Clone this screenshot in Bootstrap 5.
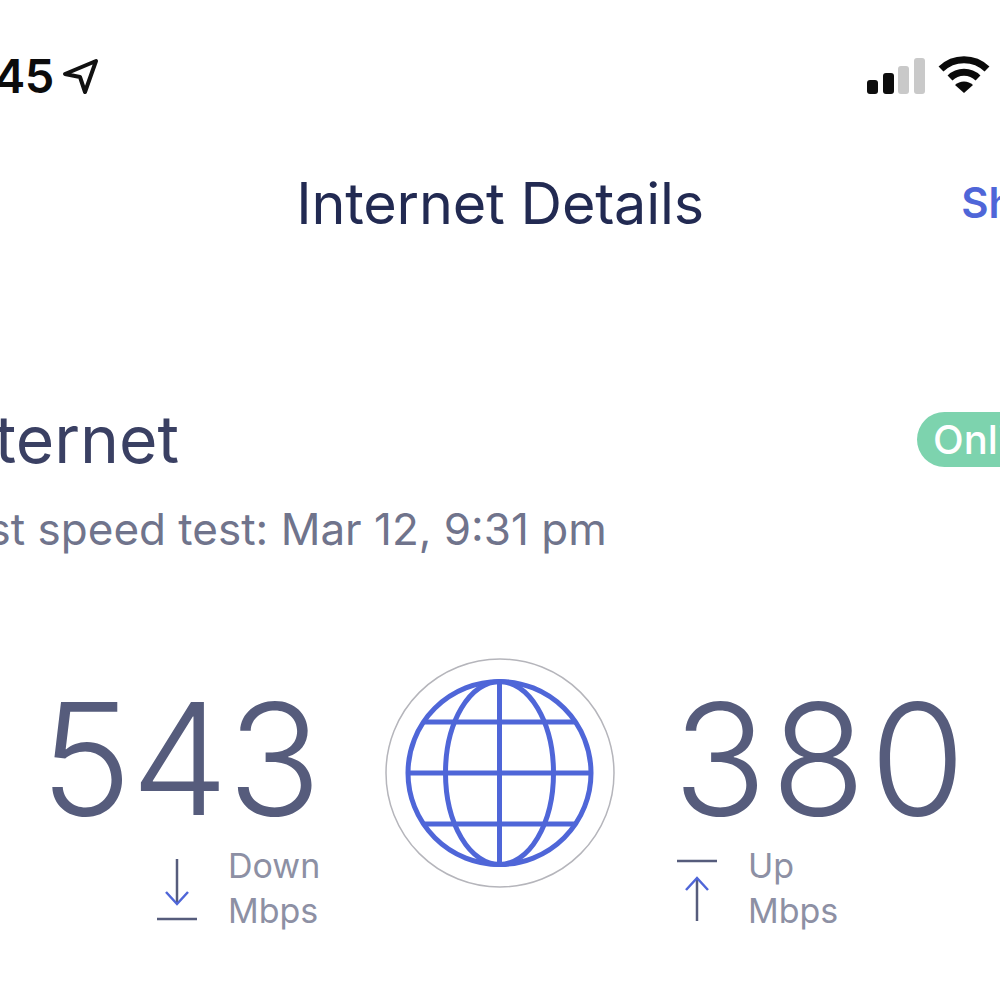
<!DOCTYPE html>
<html lang="en">
<head>
  <meta charset="UTF-8">
  <title>Internet Details</title>
  <link href="https://cdn.jsdelivr.net/npm/bootstrap@5.3.0/dist/css/bootstrap.min.css" rel="stylesheet">
  <style>
    html, body { width: 1000px; height: 1000px; overflow: hidden; background: #fff; }
    body { font-family: Inter, "Liberation Sans", sans-serif; }
    .screen { width: 1240px; margin-left: -120px; }
    .status-bar { height: 110px; padding: 51px 130px 0 0; }
    .clock { font-size: 47px; font-weight: 600; line-height: 50px; color: #0c0c0c; margin-left: 70px; letter-spacing: -.5px; }
    .status-icons { gap: 13px; padding-top: 5px; }
    .top-title { height: 70px; margin-top: 58px; position: relative; }
    .top-title h1 { font-size: 57.5px; font-weight: 400; line-height: 70px; color: #222a52; margin: 0; letter-spacing: -.2px; }
    .share-link { color: #4f66d8; font-size: 42px; font-weight: 600; line-height: 70px; right: 41px; position: absolute; top: 0; text-decoration: none; }
    .net-block { margin-top: 163px; padding: 0 37px 0 58px; }
    .net-name { font-size: 66px; line-height: 76px; color: #3a4063; font-weight: 400; margin: 0; }
    .net-sub { font-size: 44px; line-height: 50px; color: #70748c; margin-top: 27px; }
    .online-pill { background: #7dd3ae; color: #fff; font-size: 40px; font-weight: 500; height: 55px; line-height: 55px; border-radius: 28px; padding: 0 16px; width: 166px; margin-top: 11px; }
    .speed-row { display: grid; grid-template-columns: 345px 230px auto; padding-left: 160px; }
    .speed-num { font-size: 155px; font-weight: 300; line-height: 160px; color: #565c7c; letter-spacing: -1px; }
    .speed-right .speed-num { letter-spacing: 4px; }
    .speed-sub { color: #8d90a4; font-size: 34px; line-height: 45px; margin-top: 18px; }
    .speed-sub svg { flex: none; }
    .speed-label { margin-top: -14px; margin-left: 7px; }
    .down-sub { margin-left: 117px; }
    .up-sub { margin-left: 4px; }
    .speed-top { margin-top: 125px; }
    .speed-right { padding-left: 58px; }
    .speed-globe { margin-top: 104px; }
  </style>
</head>
<body>
  <div class="screen">
    <div class="status-bar d-flex justify-content-between align-items-start">
      <div class="d-flex align-items-center">
        <span class="clock">9:45</span>
        <svg class="ms-2" width="38" height="38" viewBox="0 0 38 38"><path d="M3 17 L34 4 L23 35 L18 20 Z" fill="none" stroke="#111" stroke-width="4" stroke-linejoin="round"/></svg>
      </div>
      <div class="status-icons d-flex align-items-end">
        <svg width="58" height="36" viewBox="0 0 58 36">
          <rect x="0" y="22" width="11" height="14" rx="3" fill="#0d0d0d"/>
          <rect x="16" y="15" width="11" height="21" rx="3" fill="#0d0d0d"/>
          <rect x="31" y="8" width="11" height="28" rx="3" fill="#c9c9c9"/>
          <rect x="47" y="0" width="11" height="36" rx="3" fill="#c9c9c9"/>
        </svg>
        <svg width="52" height="38" viewBox="0 0 52 38">
          <path d="M3 13 A33 33 0 0 1 49 13" fill="none" stroke="#0a0a0a" stroke-width="7"/>
          <path d="M12 22 A20 20 0 0 1 40 22" fill="none" stroke="#0a0a0a" stroke-width="7"/>
          <path d="M26 37 L17 29 A13 13 0 0 1 35 29 Z" fill="#0a0a0a"/>
        </svg>
      </div>
    </div>

    <div class="top-title text-center">
      <h1>Internet Details</h1>
      <a class="share-link" href="#">Share</a>
    </div>

    <div class="net-block d-flex justify-content-between align-items-start">
      <div>
        <h2 class="net-name">Internet</h2>
        <div class="net-sub">Last speed test: Mar 12, 9:31 pm</div>
      </div>
      <div class="online-pill">Online</div>
    </div>

    <div class="speed-row">
      <div class="speed-top">
        <div class="speed-num">543</div>
        <div class="speed-sub down-sub d-flex gap-3">
          <svg class="me-2" width="40" height="70" viewBox="0 0 40 70">
            <path d="M20 2 V46" stroke="#565c7c" stroke-width="2.5" fill="none"/>
            <path d="M9 35 L20 47 L31 35" stroke="#4f66d8" stroke-width="2.5" fill="none"/>
            <path d="M0 62 H40" stroke="#565c7c" stroke-width="2.5" fill="none"/>
          </svg>
          <div class="speed-label">Down<br>Mbps</div>
        </div>
      </div>
      <div class="speed-globe">
        <svg width="230" height="230" viewBox="0 0 230 230">
          <circle cx="115" cy="115" r="114" fill="none" stroke="#b5b5bb" stroke-width="1.5"/>
          <g fill="none" stroke="#4f66d8" stroke-width="5">
            <circle cx="114.5" cy="115" r="91.5"/>
            <ellipse cx="114.5" cy="115" rx="54" ry="91.5"/>
            <path d="M114.5 24 V206 M23 115 H206 M38 64 H191 M38 166 H191"/>
          </g>
        </svg>
      </div>
      <div class="speed-top speed-right">
        <div class="speed-num">380</div>
        <div class="speed-sub up-sub d-flex gap-3">
          <svg class="me-2" width="40" height="70" viewBox="0 0 40 70">
            <path d="M0 4 H40" stroke="#565c7c" stroke-width="2.5" fill="none"/>
            <path d="M20 22 V64" stroke="#565c7c" stroke-width="2.5" fill="none"/>
            <path d="M9 33 L20 21 L31 33" stroke="#4f66d8" stroke-width="2.5" fill="none"/>
          </svg>
          <div class="speed-label">Up<br>Mbps</div>
        </div>
      </div>
    </div>
  </div>
  <script src="https://cdn.jsdelivr.net/npm/bootstrap@5.3.0/dist/js/bootstrap.bundle.min.js"></script>
</body>
</html>
